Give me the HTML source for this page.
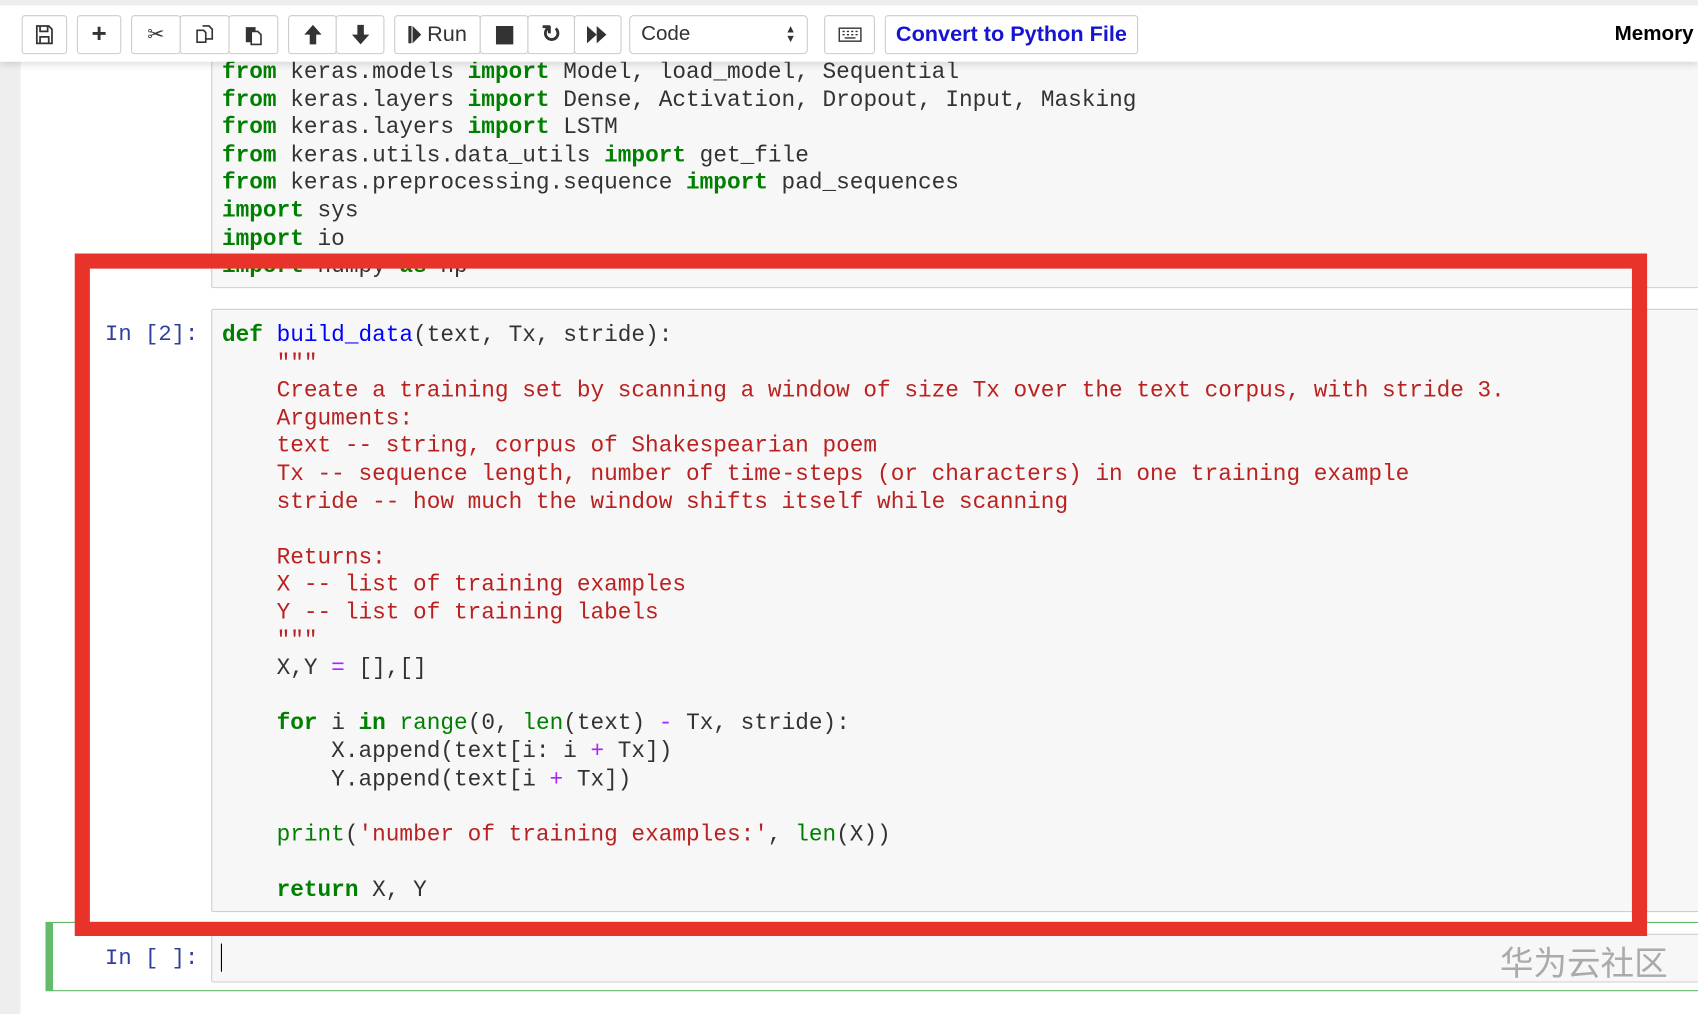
<!DOCTYPE html>
<html><head><meta charset="utf-8"><style>
html,body{margin:0;padding:0;width:1698px;height:1014px;overflow:hidden;background:#fff}
#w{position:absolute;left:0;top:0;width:1568px;height:936px;transform:scale(1.08291,1.0833);transform-origin:0 0;font-family:"Liberation Sans",sans-serif}
.strip{position:absolute;left:0;top:0;width:19px;height:936px;background:#eee}
.tb{position:absolute;left:0;top:0;width:1568px;height:57px;background:#fff;box-shadow:0 3px 6px rgba(0,0,0,.12);z-index:5;border-top:5px solid #eee;box-sizing:border-box}
.b{position:absolute;top:9px;height:36px;border:1px solid #ccc;border-radius:3px;background:#fff;box-sizing:border-box;display:flex;align-items:center;justify-content:center;font-size:19px;color:#333}
.cell{position:absolute;background:#f7f7f7;border:1px solid #cfcfcf;box-sizing:border-box;border-radius:2px}
pre{margin:0;position:absolute;font-family:"Liberation Mono",monospace;font-size:21px;line-height:25.6px;color:#333}
.k{color:#008000;font-weight:bold}.s{color:#BA2121}.f{color:#0000FF}.o{color:#AA22FF}.g{color:#008000}
.p{position:absolute;font-family:"Liberation Mono",monospace;font-size:20.5px;color:#303F9F}
</style></head><body><div id="w">
<div class="strip"></div>
<div class="tb">
<div class="b" style="left:20px;width:42px"><svg width="20" height="20" viewBox="0 0 20 20" fill="none" stroke="#333" stroke-width="1.6"><path d="M3 2h11l3 3v13H3z M6 2v5h7V2 M6 12h8v6H6z"/></svg></div>
<div class="b" style="left:71px;width:41px;font-weight:bold;font-size:24px">+</div>
<div class="b" style="left:121px;width:46px">✂</div>
<div class="b" style="left:166px;width:46px"><svg width="20" height="20" viewBox="0 0 20 20" fill="none" stroke="#333" stroke-width="1.5"><path d="M3 6h6l2 2v9H3z M8 2h6l3 3v9h-6"/></svg></div>
<div class="b" style="left:211px;width:46px"><svg width="20" height="20" viewBox="0 0 20 20"><path d="M3 3h9v14H3z" fill="#333"/><path d="M8 7h6l3 3v9H8z" fill="#fff" stroke="#333" stroke-width="1.5"/></svg></div>
<div class="b" style="left:266px;width:45px"><svg width="18" height="20" viewBox="0 0 18 20"><path d="M9 1L1 10h5v9h6v-9h5z" fill="#333"/></svg></div>
<div class="b" style="left:310px;width:45px"><svg width="18" height="20" viewBox="0 0 18 20"><path d="M9 19L1 10h5V1h6v9h5z" fill="#333"/></svg></div>
<div class="b" style="left:364px;width:80px;font-size:20px"><svg width="12" height="16" viewBox="0 0 12 16"><path d="M0 0h3v16H0z M4 0l8 8-8 8z" fill="#333"/></svg>&nbsp;Run</div>
<div class="b" style="left:443px;width:45px"><div style="width:16px;height:17px;background:#333"></div></div>
<div class="b" style="left:487px;width:44px;font-weight:bold;font-size:22px">↻</div>
<div class="b" style="left:530px;width:44px"><svg width="20" height="16" viewBox="0 0 20 16"><path d="M0 0l9 8-9 8z M9 0l9 8-9 8z" fill="#333"/></svg></div>
<div class="b" style="left:581px;width:165px;justify-content:space-between;padding:0 10px;border-radius:4px"><span>Code</span><span style="font-size:10px;line-height:9px">▲<br>▼</span></div>
<div class="b" style="left:761px;width:47px"><svg width="22" height="14" viewBox="0 0 22 14" fill="none" stroke="#333" stroke-width="1.3"><rect x="1" y="1" width="20" height="12"/><path d="M4 4h2M8 4h2M12 4h2M16 4h2M4 7h2M8 7h2M12 7h2M16 7h2M6 10h10"/></svg></div>
<div class="b" style="left:817px;width:234px;color:#1515d0;font-weight:bold;font-size:20px">Convert to Python File</div>
<div style="position:absolute;left:1491px;top:16px;font-weight:bold;font-size:19px;color:#000">Memory</div>
</div>
<div class="cell" style="left:195px;top:20px;width:1380px;height:246px"></div>
<pre style="left:205px;top:55px"><span class="k">from</span> keras.models <span class="k">import</span> Model, load_model, Sequential
<span class="k">from</span> keras.layers <span class="k">import</span> Dense, Activation, Dropout, Input, Masking
<span class="k">from</span> keras.layers <span class="k">import</span> LSTM
<span class="k">from</span> keras.utils.data_utils <span class="k">import</span> get_file
<span class="k">from</span> keras.preprocessing.sequence <span class="k">import</span> pad_sequences
<span class="k">import</span> sys
<span class="k">import</span> io
<span class="k">import</span> numpy <span class="k">as</span> np</pre>
<div class="p" style="left:97px;top:298px">In [2]:</div>
<div class="cell" style="left:195px;top:285px;width:1380px;height:557px"></div>
<pre style="left:205px;top:298px"><span class="k">def</span> <span class="f">build_data</span>(text, Tx, stride):
    <span class="s">"""
    Create a training set by scanning a window of size Tx over the text corpus, with stride 3.
    Arguments:
    text -- string, corpus of Shakespearian poem
    Tx -- sequence length, number of time-steps (or characters) in one training example
    stride -- how much the window shifts itself while scanning

    Returns:
    X -- list of training examples
    Y -- list of training labels
    """</span>
    X,Y <span class="o">=</span> [],[]

    <span class="k">for</span> i <span class="k">in</span> <span class="g">range</span>(0, <span class="g">len</span>(text) <span class="o">-</span> Tx, stride):
        X.append(text[i: i <span class="o">+</span> Tx])
        Y.append(text[i <span class="o">+</span> Tx])

    <span class="g">print</span>(<span class="s">'number of training examples:'</span>, <span class="g">len</span>(X))

    <span class="k">return</span> X, Y</pre>
<div style="position:absolute;left:42px;top:851px;width:1540px;height:64px;border:1px solid #66bb6a;border-left:7px solid #66bb6a;box-sizing:border-box"></div>
<div class="p" style="left:97px;top:874px">In [ ]:</div>
<div class="cell" style="left:195px;top:862px;width:1380px;height:45px"></div>
<div style="position:absolute;left:204px;top:871px;width:1px;height:26px;background:#000"></div>
<div style="position:absolute;left:1385px;top:864px;font-family:'Noto Sans CJK SC',sans-serif;font-size:31px;color:#aaa">华为云社区</div>
<div style="position:absolute;left:69px;top:234px;width:1452px;height:630px;border:14px solid #e8332a;border-bottom-width:13px;box-sizing:border-box;z-index:3"></div>
</div></body></html>
